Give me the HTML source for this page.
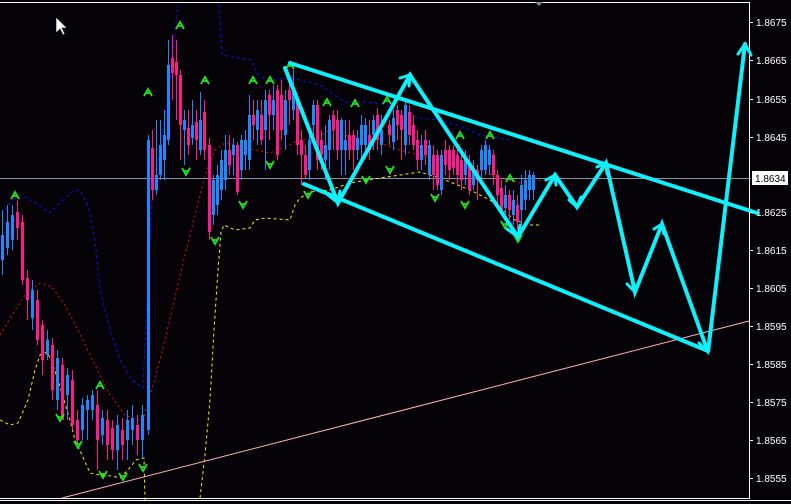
<!DOCTYPE html>
<html><head><meta charset="utf-8"><style>
html,body{margin:0;padding:0;background:#050308;}
svg{display:block}
text{font-family:"Liberation Sans",sans-serif;font-size:10px;fill:#fff}
</style></head><body>
<svg width="791" height="504" viewBox="0 0 791 504" xmlns="http://www.w3.org/2000/svg">
<rect width="791" height="504" fill="#050308"/>
<line x1="0" y1="2.5" x2="749" y2="2.5" stroke="#fff"/>
<line x1="749.5" y1="2" x2="749.5" y2="499" stroke="#fff"/>
<line x1="0" y1="498.5" x2="749" y2="498.5" stroke="#fff"/>
<line x1="0" y1="500.5" x2="791" y2="500.5" stroke="#fff"/>
<line x1="0" y1="178.5" x2="751" y2="178.5" stroke="#8494a8"/>
<line x1="62" y1="498" x2="749" y2="321" stroke="#ffb0b8" stroke-width="1"/>
<polyline fill="none" stroke="#1010e8" stroke-dasharray="3,3" points="2,215 12,200 25,197 40,206 50,213 60,203 72,192 80,190 88,205 95,240 100,290 110,330 120,360 132,380 143,388 147,300 152,200 160,150 170,80 178,5"/>
<polyline fill="none" stroke="#1010e8" stroke-dasharray="3,3" points="219,4 222,55 238,58 252,60 258,75 268,80 290,78 300,80 320,85 335,95 345,102 365,102 385,104 400,112 420,118 440,120 465,128 480,135 510,140"/>
<polyline fill="none" stroke="#e01010" stroke-dasharray="2,3" points="0,335 12,315 25,295 40,283 52,287 65,305 78,330 90,355 100,375 110,395 125,415 137,420 143,420 150,395 160,360 172,310 185,255 195,215 205,175 215,150 225,143 240,146 255,150 270,153 285,147 300,140 315,138 330,130 345,135 360,140 380,143 400,150 420,155 440,160 460,165 480,170 500,178 520,183 545,180"/>
<polyline fill="none" stroke="#f0f020" stroke-dasharray="3,3" points="0,420 10,425 18,423 28,400 35,370 40,355 47,352 52,362 58,380 64,400 70,420 75,440 82,455 90,473 100,475 112,476 120,478 128,470 136,460 144,458 145,500"/>
<polyline fill="none" stroke="#f0f020" stroke-dasharray="3,3" points="200,498 205,455 210,400 214,330 218,270 221,232 224,225 235,230 250,228 255,220 265,218 290,220 295,205 300,198 310,192 330,190 350,183 380,178 400,175 420,172 440,178 470,190 490,200 505,212 515,220 530,225 540,225"/>
<path fill="none" stroke="#1e88ff" d="M2.5,210V275M7.5,205V255M12.5,205V250M32.5,280V330M47.5,330V360M57.5,350V410M67.5,368V420M82.5,398V440M87.5,395V440M92.5,390V420M102.5,410V445M117.5,415V470M127.5,410V460M132.5,405V445M142.5,405V458M148.5,135V435M156.5,120V195M160.5,120V180M164.5,110V180M168.5,40V145M184.5,110V165M192.5,100V145M200.5,92V155M213.5,175V225M217.5,165V215M221.5,150V200M225.5,135V190M233.5,138V175M241.5,135V180M245.5,130V170M249.5,95V170M257.5,100V145M265.5,90V170M273.5,85V130M285.5,90V150M293.5,70V120M309.5,135V180M313.5,100V140M325.5,125V180M329.5,115V170M341.5,118V175M345.5,120V175M357.5,130V160M361.5,115V160M365.5,118V150M373.5,115V150M381.5,115V155M393.5,110V150M405.5,100V155M421.5,135V170M429.5,140V180M441.5,150V195M465.5,150V185M473.5,160V190M481.5,145V180M485.5,140V175M489.5,145V175M505.5,185V215M513.5,190V225M521.5,175V225M525.5,170V210M529.5,170V200M533.5,172V200"/>
<path fill="none" stroke="#ff1a8c" d="M17.5,200V240M22.5,215V285M27.5,270V320M37.5,290V345M42.5,320V375M52.5,338V400M62.5,358V420M72.5,370V430M77.5,410V445M97.5,390V470M107.5,410V460M112.5,420V460M122.5,418V460M137.5,415V455M152.5,130V200M172.5,35V100M176.5,40V120M180.5,70V160M188.5,110V155M196.5,110V160M204.5,100V160M209.5,138V240M229.5,135V175M237.5,142V195M253.5,100V140M261.5,100V145M269.5,90V140M277.5,85V160M281.5,80V140M289.5,75V125M297.5,95V155M301.5,130V185M305.5,145V178M317.5,100V170M321.5,130V170M333.5,110V150M337.5,110V160M349.5,120V160M353.5,130V170M369.5,120V160M377.5,108V150M389.5,120V145M397.5,105V140M401.5,110V160M409.5,105V145M413.5,115V150M417.5,130V170M425.5,130V165M433.5,145V190M437.5,150V190M445.5,140V175M449.5,145V180M453.5,145V175M457.5,148V185M461.5,150V190M469.5,155V195M477.5,165V200M493.5,150V185M497.5,170V205M501.5,180V215M509.5,190V220M517.5,195V230"/>
<path fill="#1e88ff" d="M1,235h3V260h-3zM6,222h3V248h-3zM11,215h3V240h-3zM31,290h3V318h-3zM46,340h3V355h-3zM56,358h3V400h-3zM66,375h3V395h-3zM81,405h3V430h-3zM86,400h3V410h-3zM91,395h3V410h-3zM101,418h3V435h-3zM116,425h3V450h-3zM126,420h3V440h-3zM131,418h3V430h-3zM141,415h3V440h-3zM147,140h3V430h-3zM155,175h3V190h-3zM159,145h3V175h-3zM163,135h3V160h-3zM167,65h3V140h-3zM183,120h3V130h-3zM191,125h3V138h-3zM199,120h3V150h-3zM212,180h3V215h-3zM216,175h3V205h-3zM220,160h3V190h-3zM224,150h3V180h-3zM232,145h3V155h-3zM240,140h3V170h-3zM244,140h3V155h-3zM248,115h3V160h-3zM256,110h3V130h-3zM264,100h3V130h-3zM272,100h3V115h-3zM284,100h3V135h-3zM292,90h3V110h-3zM308,140h3V170h-3zM312,105h3V125h-3zM324,145h3V160h-3zM328,120h3V150h-3zM340,120h3V150h-3zM344,140h3V150h-3zM356,138h3V150h-3zM360,125h3V145h-3zM364,125h3V145h-3zM372,120h3V135h-3zM380,130h3V145h-3zM392,118h3V142h-3zM404,105h3V145h-3zM420,145h3V160h-3zM428,145h3V175h-3zM440,155h3V190h-3zM464,160h3V175h-3zM472,170h3V185h-3zM480,150h3V170h-3zM484,145h3V170h-3zM488,150h3V165h-3zM504,195h3V208h-3zM512,200h3V215h-3zM520,185h3V210h-3zM524,180h3V200h-3zM528,175h3V190h-3zM532,175h3V190h-3z"/>
<path fill="#ff1a8c" d="M16,212h3V228h-3zM21,222h3V280h-3zM26,278h3V300h-3zM36,300h3V340h-3zM41,325h3V360h-3zM51,345h3V390h-3zM61,365h3V420h-3zM71,380h3V425h-3zM76,420h3V440h-3zM96,405h3V440h-3zM106,420h3V445h-3zM111,428h3V450h-3zM121,430h3V445h-3zM136,425h3V440h-3zM151,148h3V190h-3zM171,58h3V73h-3zM175,62h3V75h-3zM179,75h3V125h-3zM187,128h3V145h-3zM195,122h3V140h-3zM203,112h3V150h-3zM208,145h3V232h-3zM228,150h3V165h-3zM236,145h3V192h-3zM252,115h3V125h-3zM260,115h3V140h-3zM268,95h3V115h-3zM276,90h3V155h-3zM280,95h3V130h-3zM288,90h3V100h-3zM296,100h3V145h-3zM300,140h3V155h-3zM304,155h3V175h-3zM316,105h3V160h-3zM320,140h3V155h-3zM332,115h3V130h-3zM336,120h3V150h-3zM348,135h3V150h-3zM352,135h3V150h-3zM368,135h3V150h-3zM376,115h3V140h-3zM388,125h3V135h-3zM396,110h3V125h-3zM400,115h3V130h-3zM408,112h3V135h-3zM412,125h3V145h-3zM416,140h3V160h-3zM424,140h3V155h-3zM432,155h3V175h-3zM436,155h3V185h-3zM444,150h3V165h-3zM448,150h3V170h-3zM452,150h3V168h-3zM456,155h3V175h-3zM460,160h3V180h-3zM468,165h3V190h-3zM476,170h3V180h-3zM492,155h3V175h-3zM496,175h3V195h-3zM500,188h3V210h-3zM508,195h3V210h-3zM516,205h3V222h-3z"/>
<g fill="none" stroke="#22e022" stroke-width="1.8">
<path d="M11,199l4,-7l4,7M13,196h4M96,389l4,-7l4,7M98,386h4M144,96l4,-7l4,7M146,93h4M176,29l4,-7l4,7M178,26h4M201,84l4,-7l4,7M203,81h4M249,84l4,-7l4,7M251,81h4M266,84l4,-7l4,7M268,81h4M286,69l4,-7l4,7M288,66h4M323,106l4,-7l4,7M325,103h4M351,107l4,-7l4,7M353,104h4M383,104l4,-7l4,7M385,101h4M456,139l4,-7l4,7M458,136h4M486,139l4,-7l4,7M488,136h4M506,182l4,-7l4,7M508,179h4"/>
<path d="M56,414l4,7l4,-7M58,417h4M74,441l4,7l4,-7M76,444h4M99,471l4,7l4,-7M101,474h4M119,473l4,7l4,-7M121,476h4M139,464l4,7l4,-7M141,467h4M182,168l4,7l4,-7M184,171h4M211,237l4,7l4,-7M213,240h4M239,201l4,7l4,-7M241,204h4M266,161l4,7l4,-7M268,164h4M304,191l4,7l4,-7M306,194h4M334,198l4,7l4,-7M336,201h4M362,176l4,7l4,-7M364,179h4M386,166l4,7l4,-7M388,169h4M431,194l4,7l4,-7M433,197h4M461,201l4,7l4,-7M463,204h4M501,221l4,7l4,-7M503,224h4M514,235l4,7l4,-7M516,238h4"/>
</g>
<g stroke="#0ff0fa" stroke-width="4" fill="none" stroke-linecap="round" stroke-linejoin="miter">
<line x1="290" y1="63" x2="757" y2="213"/>
<line x1="304" y1="184" x2="708" y2="351"/>
<polyline points="285,68 338,203 410,75 518,237 555,175 577,207 606,163 635,292 662,224 708,352 745,44"/>
<path stroke-width="3" d="M328,195l10,8l2,-12M400,78l10,-3l-1,11M507,229l11,8l2,-12M546,180l9,-5l1,10M569,200l8,7l4,-10M597,167l9,-4l1,11M627,284l8,8l4,-10M654,229l8,-5l2,10M699,343l9,9l2,-12M738,54l7,-10l6,11"/>
</g>
<g stroke="#fff"><path d="M749,22.5h4M749,60.5h4M749,99.5h4M749,137.5h4M749,212.5h4M749,250.5h4M749,288.5h4M749,326.5h4M749,364.5h4M749,402.5h4M749,440.5h4M749,478.5h4"/></g>
<text x="756" y="26">1.8675</text>
<text x="756" y="64">1.8665</text>
<text x="756" y="103">1.8655</text>
<text x="756" y="141">1.8645</text>
<text x="756" y="216">1.8625</text>
<text x="756" y="254">1.8615</text>
<text x="756" y="292">1.8605</text>
<text x="756" y="330">1.8595</text>
<text x="756" y="368">1.8585</text>
<text x="756" y="406">1.8575</text>
<text x="756" y="444">1.8565</text>
<text x="756" y="482">1.8555</text>
<rect x="752" y="171" width="36" height="14" fill="#fff"/>
<text x="755" y="182" style="fill:#000">1.8634</text>
<path d="M535,2l4,4l4,-4z" fill="#888"/>
<path d="M56,17v16l4,-4l3,6l2,-1l-3,-6h5z" fill="#fff" stroke="#000" stroke-width="0.6"/>
</svg>
</body></html>
